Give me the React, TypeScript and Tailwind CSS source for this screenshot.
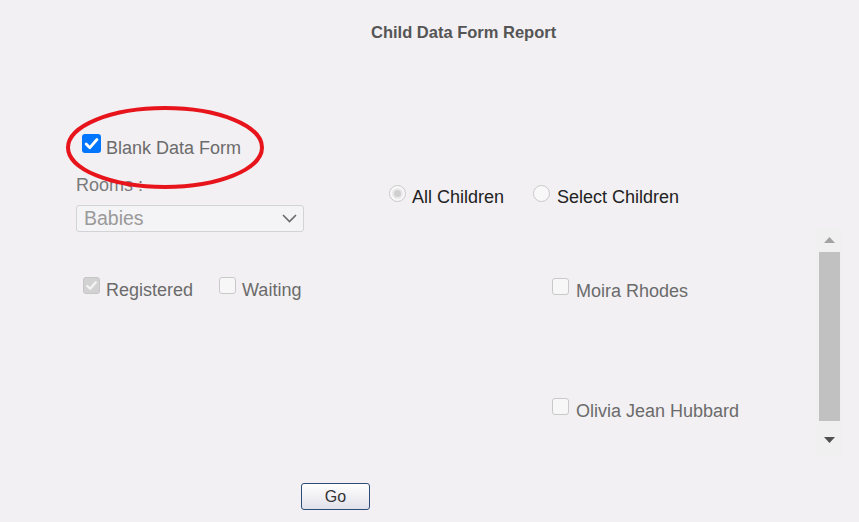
import React from 'react';

const font = { fontFamily: '"Liberation Sans", Arial, sans-serif' };

function Check({ color = 'white' }: { color?: string }) {
    return (
        <svg viewBox="0 0 16 16" className="w-full h-full">
            <path d="M3.5 8.5 L6.6 11.5 L12.6 4.6" fill="none" stroke={color} strokeWidth="2.4" strokeLinecap="round" strokeLinejoin="round" />
        </svg>
    );
}

function Box({ checked, disabled }: { checked?: boolean; disabled?: boolean }) {
    if (checked && !disabled) {
        return (
            <div className="w-[19px] h-[19px] rounded-[3px] bg-[#0075ff] shrink-0">
                <Check />
            </div>
        );
    }
    if (checked) {
        return (
            <div className="w-[17px] h-[17px] rounded-[3px] bg-[#d2d2d2] border border-[#c6c6c6] shrink-0">
                <Check color="#f4f4f4" />
            </div>
        );
    }
    return <div className="w-[17px] h-[17px] rounded-[3px] bg-[#f7f7f8] border border-[#c9c9c9] shrink-0" />;
}

function Radio({ checked }: { checked?: boolean }) {
    return (
        <div className="w-[17px] h-[17px] rounded-full border border-[#c9c9c9] bg-[#f8f8f9] shrink-0 flex items-center justify-center">
            {checked && <div className="w-[11px] h-[11px] rounded-full bg-[#cfcfcf] border-[2px] border-[#e9e9e9]" />}
        </div>
    );
}

const children = ['Moira Rhodes', 'Olivia Jean Hubbard'];

export default function App() {
    return (
        <div className="relative w-[859px] h-[522px] bg-[#f2f0f3] overflow-hidden" style={font}>
            <div className="pt-[22px] pl-[371px] text-[16.5px] leading-[20px] font-bold text-[#555]">
                Child Data Form Report
            </div>

            <div className="flex mt-[92px]">
                {/* left column */}
                <div className="w-[389px] pl-[76px] flex flex-col">
                    <div className="flex items-start pl-[6px] gap-[5px]">
                        <Box checked />
                        <span className="mt-[4px] text-[18px] leading-[20px] text-[#6b6b6b]">Blank Data Form</span>
                    </div>
                    <div className="mt-[17px] text-[18px] leading-[20px] text-[#7a7a7a]">Rooms :</div>
                    <div className="mt-[10px] w-[228px] h-[27px] rounded-[3px] border border-[#d3d3d6] bg-[#f4f3f5] flex items-center justify-between pl-[7px] pr-[6px]">
                        <span className="-mt-[2px] text-[19.5px] leading-[22px] text-[#9a9a9a]">Babies</span>
                        <svg width="15" height="9" viewBox="0 0 15 9">
                            <polyline points="1,1 7.5,7.5 14,1" fill="none" stroke="#6a6a6a" strokeWidth="1.6" />
                        </svg>
                    </div>
                    <div className="mt-[45px] flex items-start pl-[7px]">
                        <div className="flex items-start gap-[6px]">
                            <Box checked disabled />
                            <span className="mt-[3px] text-[18px] leading-[20px] text-[#6b6b6b]">Registered</span>
                        </div>
                        <div className="flex items-start gap-[6px] ml-[26px]">
                            <Box />
                            <span className="mt-[3px] text-[18px] leading-[20px] text-[#6b6b6b]">Waiting</span>
                        </div>
                    </div>
                </div>

                {/* right column */}
                <div className="flex flex-col">
                    <div className="mt-[51px] flex items-start">
                        <div className="flex items-start gap-[6px]">
                            <Radio checked />
                            <span className="mt-[2px] text-[18px] leading-[20px] text-[#222]">All Children</span>
                        </div>
                        <div className="flex items-start gap-[7px] ml-[29px]">
                            <Radio />
                            <span className="mt-[2px] text-[18px] leading-[20px] text-[#222]">Select Children</span>
                        </div>
                    </div>
                    <div className="mt-[20px] ml-[151px] w-[302px] h-[228px] flex">
                        <div className="flex-1 pl-[12px] pt-[51px] flex flex-col overflow-hidden">
                            {children.map((name) => (
                                <div key={name} className="h-[120px] shrink-0 flex items-start gap-[7px]">
                                    <Box />
                                    <span className="mt-[3px] text-[18px] leading-[20px] text-[#6b6b6b]">{name}</span>
                                </div>
                            ))}
                        </div>
                        <div className="w-[26px] h-full bg-[#f0f0f1] flex flex-col items-center">
                            <div className="h-[25px] flex items-center justify-center">
                                <svg width="11" height="6" viewBox="0 0 11 6"><polygon points="0,6 5.5,0 11,6" fill="#a3a3a3" /></svg>
                            </div>
                            <div className="w-[21px] h-[169px] bg-[#c1c1c1]" />
                            <div className="flex-1 flex items-center justify-center pt-[4px]">
                                <svg width="11" height="6" viewBox="0 0 11 6"><polygon points="0,0 11,0 5.5,6" fill="#505050" /></svg>
                            </div>
                        </div>
                    </div>
                </div>
            </div>

            <div className="mt-[28px] pl-[301px]">
                <button className="w-[69px] h-[27px] rounded-[3px] border border-[#2e4c7a] bg-gradient-to-b from-white to-[#e1e1ea] text-[16px] leading-[20px] text-[#333]" style={font}>
                    Go
                </button>
            </div>

            <svg className="absolute left-0 top-0 pointer-events-none" width="859" height="522">
                <ellipse cx="165" cy="147.5" rx="97" ry="39.5" fill="none" stroke="#e8141c" strokeWidth="4" />
            </svg>
        </div>
    );
}
